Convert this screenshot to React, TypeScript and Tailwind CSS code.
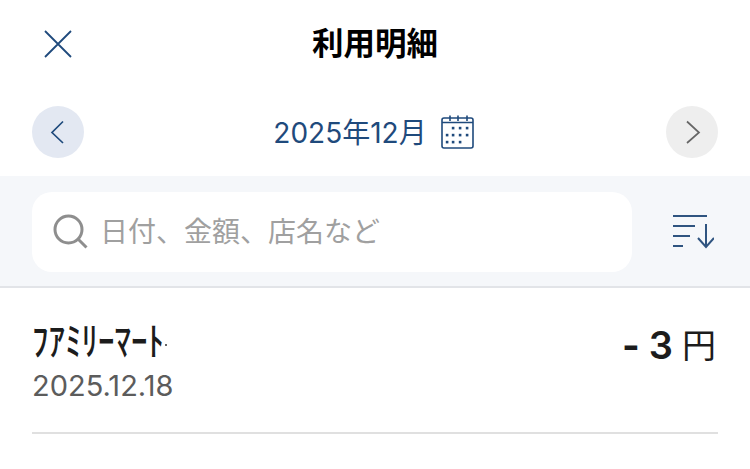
const font = { cjk: 'font-["Inter","Noto_Sans_CJK_JP",sans-serif]' }

function CalendarIcon() {
  const dots = [
    [12, 13], [19, 13], [26, 13],
    [6, 20], [12, 20], [19, 20], [26, 20],
    [6, 27], [12, 27], [19, 27],
  ]
  return (
    <svg width="33" height="34" viewBox="0 0 33 34" fill="none" stroke="#1f4a7c" strokeWidth="1.6">
      <rect x="1" y="3" width="31" height="30" rx="2" />
      <path d="M1 7.5H32M9 0.5V6M17 0.5V6M26 0.5V6" />
      {dots.map(([x, y], i) => (
        <rect key={i} x={x - 1.2} y={y - 1.2} width="2.6" height="2.6" fill="#1f4a7c" stroke="none" />
      ))}
    </svg>
  )
}

export default function App() {
  return (
    <div className={`w-[750px] h-[469px] overflow-hidden bg-white ${font.cjk}`}>
      {/* Header */}
      <div className="h-[88px] px-[32px] flex items-center relative">
        <svg width="52" height="52" viewBox="0 0 52 52" fill="none" stroke="#1f4a7c" strokeWidth="1.8">
          <path d="M13 13L39 39M39 13L13 39" />
        </svg>
        <h1 className="absolute inset-x-0 text-center text-[31.5px] leading-[40px] font-bold text-black">利用明細</h1>
      </div>

      {/* Month nav */}
      <div className="h-[88px] px-[32px] pt-[18px] flex items-start justify-between">
        <button className="w-[52px] h-[52px] rounded-full bg-[#e3e8f2]">
          <svg width="52" height="52" viewBox="0 0 52 52" fill="none" stroke="#1f4a7c" strokeWidth="1.7">
            <path d="M31 15.5L20 26.5L31 37" />
          </svg>
        </button>
        <div className="h-[52px] mr-[3px] flex items-center gap-[14px] text-[28px] text-[#1f4a7c]">
          <span className="mt-[1px]">2025年12月</span>
          <CalendarIcon />
        </div>
        <button className="w-[52px] h-[52px] rounded-full bg-[#eeeeee]">
          <svg width="52" height="52" viewBox="0 0 52 52" fill="none" stroke="#666666" strokeWidth="1.7">
            <path d="M21 15.5L33 26.5L21 37" />
          </svg>
        </button>
      </div>

      {/* Search band */}
      <div className="h-[112px] bg-[#f5f7fa] border-b-2 border-[#e2e4e8] pl-[32px] pr-[36px] pt-[16px] flex items-start justify-between">
        <div className="w-[600px] h-[80px] bg-white rounded-[20px] pl-[20px] flex items-center gap-[10px]">
          <svg width="38" height="38" viewBox="0 0 38 38" fill="none" stroke="#8e8e8e" strokeWidth="3">
            <circle cx="16.5" cy="16.5" r="13.5" />
            <path d="M26 26L34.5 34.5" />
          </svg>
          <span className="text-[28px] text-[#a0a0a0]">日付、金額、店名など</span>
        </div>
        <svg className="mt-[22px]" width="42" height="36" viewBox="0 0 42 36" fill="none" stroke="#2f5480" strokeWidth="2">
          <path d="M1 2H35M1 12H23M1 22H18M1 32H11M34 10V33M26 24L34 33L42 24" />
        </svg>
      </div>

      {/* Row */}
      <div className="mx-[32px] w-[686px] h-[146px] border-b-2 border-[#e0e0e0] flex justify-between pt-[30px]">
        <div>
          <div className="flex items-end text-[33px] leading-[40px] font-medium text-[#1c1c1c] font-['Noto_Sans_CJK_JP',sans-serif]">
            <span className="inline-block scale-y-[1.18]">ﾌｱﾐﾘｰﾏｰﾄ</span>
            <span className="w-[2px] h-[2px] mb-[12px] ml-[1px] bg-[#666666]" />
          </div>
          <div className="text-[29px] leading-[36px] mt-[10px] text-[#5c5c5c]">2025.12.18</div>
        </div>
        <div className="flex items-center h-[50px] mt-[2px] pr-[2px] text-[#1c1c1c]">
          <span className="text-[38px] font-bold">-</span>
          <span className="text-[38px] font-semibold ml-[9px]">3</span>
          <span className="text-[34px] ml-[9px]">円</span>
        </div>
      </div>
    </div>
  )
}
